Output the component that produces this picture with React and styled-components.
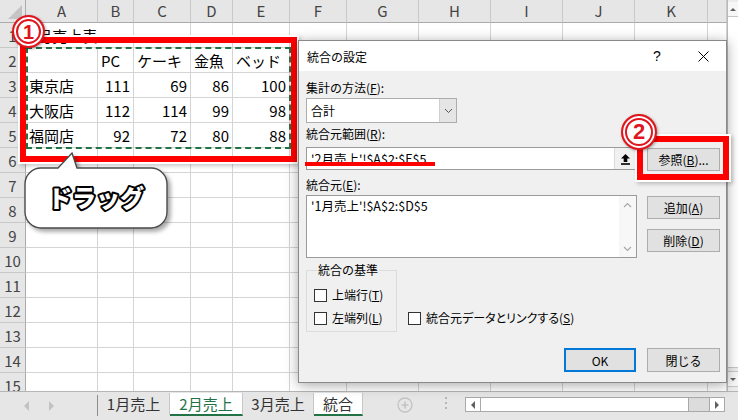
import React from 'react';
import styled, { createGlobalStyle } from 'styled-components';

const GlobalStyle = createGlobalStyle`
  html, body {
    margin: 0;
    padding: 0;
  }
  body {
    font-family: "Noto Sans CJK JP", "Noto Sans", sans-serif;
    background: #fff;
    overflow: hidden;
  }
`;

const COLS = [72, 36, 57, 42, 57, 57, 72, 72, 72, 72, 73, 19];
const LETTERS = ['A', 'B', 'C', 'D', 'E', 'F', 'G', 'H', 'I', 'J', 'K', ''];
const DATA = [
  [{ text: '2月売上表', span: 2 }],
  ['', 'PC', 'ケーキ', '金魚', 'ベッド'],
  ['東京店', 111, 69, 86, 100],
  ['大阪店', 112, 114, 99, 98],
  ['福岡店', 92, 72, 80, 88],
];

const Screen = styled.div`
  position: relative;
  width: 738px;
  height: 420px;
  overflow: hidden;
  display: flex;
  flex-direction: column;
  background: #fff;
`;

/* ---------- sheet ---------- */

const SheetArea = styled.div`
  display: flex;
  height: 391px;
  flex: none;
  overflow: hidden;
`;

const Grid = styled.div`
  display: grid;
  grid-template-columns: 26px ${COLS.map((w) => `${w}px`).join(' ')};
  grid-template-rows: 23px;
  grid-auto-rows: 25px;
  width: 727px;
  flex: none;
`;

const Cell = styled.div`
  box-sizing: border-box;
  border-right: 1px solid #d4d4d4;
  border-bottom: 1px solid #d4d4d4;
  padding: 0 3px 0 3px;
  font-size: 15px;
  line-height: 25px;
  color: #000;
  white-space: nowrap;
  overflow: hidden;
  text-align: ${({ $num }) => ($num ? 'right' : 'left')};
  grid-column: ${({ $span }) => ($span ? `span ${$span}` : 'auto')};
`;

const ColHead = styled.div`
  box-sizing: border-box;
  background: #e6e6e6;
  border-right: 1px solid #c8c8c8;
  border-bottom: 1px solid #ababab;
  font-size: 15px;
  line-height: 22px;
  text-align: center;
  color: #444;
`;

const Corner = styled(ColHead)`
  border-right-color: #ababab;
  display: flex;
  align-items: flex-end;
  justify-content: flex-end;
  padding: 0 3px 3px 0;
`;

const RowHead = styled.div`
  box-sizing: border-box;
  background: #e6e6e6;
  border-right: 1px solid #ababab;
  border-bottom: 1px solid #c8c8c8;
  font-size: 15px;
  line-height: 25px;
  text-align: center;
  color: #444;
`;

const VScroll = styled.div`
  width: 11px;
  flex: none;
  box-sizing: border-box;
  border-left: 1px solid #b9b9b9;
  background: #ececec;
  display: flex;
  flex-direction: column;
`;

const VArrow = styled.div`
  height: 14px;
  flex: none;
  display: flex;
  align-items: center;
  justify-content: center;
  background: #f7f7f7;
  border-bottom: 1px solid #c6c6c6;
  margin-top: ${({ $down }) => ($down ? 'auto' : '2px')};
  margin-bottom: ${({ $down }) => ($down ? '4px' : '0')};
  border-top: ${({ $down }) => ($down ? '1px solid #c6c6c6' : 'none')};
`;

const VThumb = styled.div`
  height: 350px;
  background: #fff;
  border-bottom: 1px solid #c6c6c6;
`;

/* ---------- tab bar ---------- */

const TabBar = styled.div`
  height: 29px;
  flex: none;
  box-sizing: border-box;
  border-top: 1px solid #b5b5b5;
  background: #e6e6e6;
  display: flex;
  align-items: flex-start;
`;

const NavArea = styled.div`
  width: 98px;
  height: 21px;
  margin-top: 3px;
  box-sizing: border-box;
  border-right: 1px solid #8c8c8c;
  display: flex;
  align-items: center;
  gap: 20px;
  padding-left: 24px;
  flex: none;
`;

const Tab = styled.div`
  width: ${({ $w }) => $w}px;
  height: 23px;
  margin-top: 1px;
  flex: none;
  box-sizing: border-box;
  font-size: 15px;
  line-height: 21px;
  text-align: center;
  color: ${({ $active }) => ($active ? '#217346' : '#333')};
  background: ${({ $active, $grouped }) => ($active || $grouped ? '#fff' : 'transparent')};
  border-right: 1px solid #c6c6c6;
  border-bottom: ${({ $active, $grouped }) =>
    $active || $grouped ? '2px solid #217346' : '2px solid transparent'};
`;

const AddSheet = styled.div`
  margin: 5px 0 0 34px;
  flex: none;
  display: flex;
`;

const Dots = styled.div`
  margin: 4px 0 0 31px;
  flex: none;
  display: flex;
`;

const HScroll = styled.div`
  margin: 5px 13px 0 auto;
  width: 260px;
  height: 15px;
  box-sizing: border-box;
  border: 1px solid #a9a9a9;
  display: flex;
  flex: none;
`;

const HArrow = styled.div`
  width: 14px;
  flex: none;
  background: #fff;
  display: flex;
  align-items: center;
  justify-content: center;
  border-left: ${({ $right }) => ($right ? '1px solid #a9a9a9' : 'none')};
  border-right: ${({ $right }) => ($right ? 'none' : '1px solid #a9a9a9')};
`;

const HThumb = styled.div`
  width: 207px;
  flex: none;
  background: #fff;
  border-right: 1px solid #a9a9a9;
`;

const HTrack = styled.div`
  flex: 1;
  background: #dcdcdc;
`;

/* ---------- annotations ---------- */

const RedFrame = styled.div`
  position: absolute;
  left: ${({ $x }) => $x}px;
  top: ${({ $y }) => $y}px;
  width: ${({ $w }) => $w}px;
  height: ${({ $h }) => $h}px;
  box-sizing: border-box;
  border: 6px solid #ff0000;
  box-shadow: 0 0 0 2px #fff, 2px 2px 4px 2px rgba(0, 0, 0, 0.22);
`;

const Marquee = styled.div`
  position: absolute;
  left: 26px;
  top: 47px;
  width: 265px;
  height: 102px;
  box-sizing: border-box;
  border: 2px dashed #217346;
`;

const Badge = styled.div`
  position: absolute;
  left: ${({ $x }) => $x}px;
  top: ${({ $y }) => $y}px;
  width: ${({ $size }) => $size}px;
  height: ${({ $size }) => $size}px;
  box-sizing: border-box;
  border-radius: 50%;
  background: #fff;
  border: 2px solid #e0161e;
  box-shadow: inset 0 0 0 2px #fff, inset 0 0 0 4px #e0161e, 1px 1px 3px rgba(0, 0, 0, 0.35);
  display: flex;
  align-items: center;
  justify-content: center;
  font-family: "Liberation Sans", Arial, sans-serif;
  font-weight: 700;
  font-size: ${({ $size }) => Math.round($size * 0.62)}px;
  line-height: 1;
  color: #e0161e;
  text-shadow: 0 0 1px #fff;
`;

const Underline = styled.div`
  position: absolute;
  left: 305px;
  top: 162px;
  width: 130px;
  height: 4px;
  background: #ff0000;
`;

const Balloon = styled.svg`
  position: absolute;
  left: 22px;
  top: 150px;
  overflow: visible;
`;

/* ---------- dialog ---------- */

const Dialog = styled.div`
  position: absolute;
  left: 298px;
  top: 40px;
  width: 429px;
  height: 343px;
  box-sizing: border-box;
  border: 1px solid #8a8a8a;
  background: #f0f0f0;
  box-shadow: 0 2px 12px rgba(0, 0, 0, 0.35);
  display: flex;
  flex-direction: column;
  font-size: 12px;
  color: #000;
`;

const TitleBar = styled.div`
  height: 30px;
  flex: none;
  background: #fff;
  display: flex;
  align-items: center;
  padding-left: 8px;
  font-size: 12px;
`;

const TitleText = styled.div`
  flex: 1;
`;

const TitleButton = styled.div`
  width: 46px;
  height: 30px;
  display: flex;
  align-items: center;
  justify-content: center;
  font-family: "Liberation Sans", Arial, sans-serif;
  font-size: 14px;
`;

const Body = styled.div`
  flex: 1;
  display: flex;
  flex-direction: column;
  padding: 0 6px 0 7px;
`;

const Label = styled.div`
  line-height: 16px;
  height: 16px;
  margin-top: ${({ $mt }) => $mt}px;
  white-space: nowrap;
`;

const Row = styled.div`
  display: flex;
  gap: ${({ $gap }) => ($gap ?? 10)}px;
  margin-top: ${({ $mt }) => $mt}px;
  align-items: flex-start;
`;

const Select = styled.div`
  width: 151px;
  height: 25px;
  box-sizing: border-box;
  border: 1px solid #adadad;
  background: #fff;
  display: flex;
  margin-top: 2px;
`;

const SelectValue = styled.div`
  flex: 1;
  padding-left: 4px;
  line-height: 23px;
`;

const SelectButton = styled.div`
  width: 16px;
  background: #e5e5e5;
  border-left: 1px solid #d0d0d0;
  display: flex;
  align-items: center;
  justify-content: center;
`;

const Field = styled.div`
  width: 331px;
  height: 23px;
  box-sizing: border-box;
  border: 1px solid #9a9a9a;
  background: #fff;
  display: flex;
  flex: none;
`;

const FieldText = styled.div`
  flex: 1;
  padding-left: 4px;
  line-height: 21px;
  font-size: 12.5px;
  white-space: nowrap;
`;

const CollapseButton = styled.div`
  width: 21px;
  background: #f0f0f0;
  border-left: 1px solid #d9d9d9;
  display: flex;
  align-items: center;
  justify-content: center;
`;

const ListBox = styled.div`
  width: 331px;
  height: 63px;
  box-sizing: border-box;
  border: 1px solid #9a9a9a;
  background: #fff;
  display: flex;
  flex: none;
`;

const ListText = styled.div`
  flex: 1;
  padding: 2px 0 0 4px;
  line-height: 16px;
  font-size: 12.5px;
`;

const ListScroll = styled.div`
  width: 17px;
  background: #f7f7f7;
  display: flex;
  flex-direction: column;
  justify-content: space-between;
  align-items: center;
  padding: 6px 0 5px;
`;

const ButtonStack = styled.div`
  display: flex;
  flex-direction: column;
  gap: 10px;
  margin-top: 1px;
`;

const Button = styled.div`
  width: ${({ $w }) => $w || 73}px;
  height: ${({ $h }) => $h || 23}px;
  box-sizing: border-box;
  border: ${({ $default }) => ($default ? '2px solid #0078d7' : '1px solid #adadad')};
  background: #e1e1e1;
  display: flex;
  align-items: center;
  justify-content: center;
  flex: none;
  margin-top: ${({ $mt }) => $mt || 0}px;
  white-space: nowrap;
`;

const Group = styled.fieldset`
  margin: 4px 0 0 0;
  padding: 9px 0 5px 7px;
  width: 91px;
  box-sizing: border-box;
  border: 1px solid #dcdcdc;
  display: flex;
  flex-direction: column;
  gap: 7px;
  min-inline-size: 0;
`;

const Legend = styled.legend`
  padding: 0 1px;
  margin-left: 3px;
  line-height: 16px;
  font-size: 12px;
`;

const Check = styled.div`
  display: flex;
  align-items: center;
  gap: 5px;
  line-height: 16px;
  white-space: nowrap;
  font-feature-settings: "palt";
  align-self: ${({ $bottom }) => ($bottom ? 'flex-end' : 'auto')};
  margin: ${({ $bottom }) => ($bottom ? '0 0 6px 11px' : '0')};
`;

const Box = styled.span`
  width: 13px;
  height: 13px;
  box-sizing: border-box;
  border: 1px solid #333;
  background: #fff;
  flex: none;
`;

const Footer = styled.div`
  display: flex;
  justify-content: flex-end;
  gap: 11px;
  margin-top: 16px;
`;

function Key({ children }) {
  return <u>{children}</u>;
}

function Chevron({ up }) {
  return (
    <svg width="9" height="6" viewBox="0 0 9 6">
      <polyline
        points={up ? '1,5 4.5,1.5 8,5' : '1,1 4.5,4.5 8,1'}
        fill="none"
        stroke="#a6a6a6"
        strokeWidth="1.1"
      />
    </svg>
  );
}

function Tri({ dir, color = '#c2c2c2', size = 5 }) {
  const pts =
    dir === 'left'
      ? `${size},0 ${size},${size * 2} 0,${size}`
      : dir === 'right'
      ? `0,0 0,${size * 2} ${size},${size}`
      : dir === 'up'
      ? `0,${size} ${size * 2},${size} ${size},0`
      : `0,0 ${size * 2},0 ${size},${size}`;
  const w = dir === 'left' || dir === 'right' ? size : size * 2;
  const h = dir === 'left' || dir === 'right' ? size * 2 : size;
  return (
    <svg width={w} height={h} viewBox={`0 0 ${w} ${h}`}>
      <polygon points={pts} fill={color} />
    </svg>
  );
}

function Sheet() {
  return (
    <SheetArea>
      <Grid>
        <Corner>
          <svg width="15" height="14" viewBox="0 0 15 14">
            <polygon points="15,0 15,14 1,14" fill="#c4c4c4" />
          </svg>
        </Corner>
        {LETTERS.map((l, i) => (
          <ColHead key={i}>{l}</ColHead>
        ))}
        {Array.from({ length: 15 }).map((_, r) => {
          const row = DATA[r] || [];
          const cells = [];
          let c = 0;
          while (c < COLS.length) {
            const v = row[c];
            if (v && typeof v === 'object') {
              cells.push(
                <Cell key={c} $span={v.span}>
                  {v.text}
                </Cell>
              );
              c += v.span;
            } else {
              cells.push(
                <Cell key={c} $num={typeof v === 'number'}>
                  {v ?? ''}
                </Cell>
              );
              c += 1;
            }
          }
          return (
            <React.Fragment key={r}>
              <RowHead>{r + 1}</RowHead>
              {cells}
            </React.Fragment>
          );
        })}
      </Grid>
      <VScroll>
        <VArrow>
          <Tri dir="up" color="#606060" size={3} />
        </VArrow>
        <VThumb />
        <VArrow $down>
          <Tri dir="down" color="#606060" size={3} />
        </VArrow>
      </VScroll>
    </SheetArea>
  );
}

function SheetTabs() {
  return (
    <TabBar>
      <NavArea>
        <Tri dir="left" />
        <Tri dir="right" />
      </NavArea>
      <Tab $w={72}>1月売上</Tab>
      <Tab $w={73} $active>
        2月売上
      </Tab>
      <Tab $w={71}>3月売上</Tab>
      <Tab $w={49} $grouped>
        統合
      </Tab>
      <AddSheet>
        <svg width="16" height="16" viewBox="0 0 16 16">
          <circle cx="8" cy="8" r="7" fill="none" stroke="#c3c3c3" strokeWidth="1.3" />
          <path d="M8 4.5v7M4.5 8h7" stroke="#c3c3c3" strokeWidth="1.6" />
        </svg>
      </AddSheet>
      <Dots>
        <svg width="4" height="14" viewBox="0 0 4 14">
          <rect x="1" y="1" width="2" height="2" fill="#b5b5b5" />
          <rect x="1" y="6" width="2" height="2" fill="#b5b5b5" />
          <rect x="1" y="11" width="2" height="2" fill="#b5b5b5" />
        </svg>
      </Dots>
      <HScroll>
        <HArrow>
          <Tri dir="left" color="#606060" size={4} />
        </HArrow>
        <HThumb />
        <HTrack />
        <HArrow $right>
          <Tri dir="right" color="#606060" size={4} />
        </HArrow>
      </HScroll>
    </TabBar>
  );
}

function ConsolidateDialog() {
  return (
    <Dialog>
      <TitleBar>
        <TitleText>統合の設定</TitleText>
        <TitleButton>?</TitleButton>
        <TitleButton>
          <svg width="11" height="11" viewBox="0 0 11 11">
            <path d="M0.5 0.5l10 10M10.5 0.5l-10 10" stroke="#000" strokeWidth="1" />
          </svg>
        </TitleButton>
      </TitleBar>
      <Body>
        <Label $mt={9}>
          集計の方法(<Key>F</Key>):
        </Label>
        <Select>
          <SelectValue>合計</SelectValue>
          <SelectButton>
            <svg width="9" height="6" viewBox="0 0 9 6">
              <polyline points="1,1 4.5,4.5 8,1" fill="none" stroke="#555" strokeWidth="1" />
            </svg>
          </SelectButton>
        </Select>
        <Label $mt={3}>
          統合元範囲(<Key>R</Key>):
        </Label>
        <Row $mt={5}>
          <Field>
            <FieldText>'2月売上'!$A$2:$E$5</FieldText>
            <CollapseButton>
              <svg width="11" height="12" viewBox="0 0 11 12">
                <path d="M5.5 1L10 5.5H7.3V9H3.7V5.5H1Z" fill="#000" />
                <rect x="1" y="10.2" width="9" height="1.6" fill="#000" />
              </svg>
            </CollapseButton>
          </Field>
          <Button $mt={1}>
            参照(<Key>B</Key>)...
          </Button>
        </Row>
        <Label $mt={6}>
          統合元(<Key>E</Key>):
        </Label>
        <Row $mt={2}>
          <ListBox>
            <ListText>'1月売上'!$A$2:$D$5</ListText>
            <ListScroll>
              <Chevron up />
              <Chevron />
            </ListScroll>
          </ListBox>
          <ButtonStack>
            <Button>
              追加(<Key>A</Key>)
            </Button>
            <Button>
              削除(<Key>D</Key>)
            </Button>
          </ButtonStack>
        </Row>
        <Row $mt={0} $gap={0}>
          <Group>
            <Legend>統合の基準</Legend>
            <Check>
              <Box />
              <span>
                上端行(<Key>T</Key>)
              </span>
            </Check>
            <Check>
              <Box />
              <span>
                左端列(<Key>L</Key>)
              </span>
            </Check>
          </Group>
          <Check $bottom>
            <Box />
            <span>
              統合元データとリンクする(<Key>S</Key>)
            </span>
          </Check>
        </Row>
        <Footer>
          <Button $w={72} $h={24} $default>
            OK
          </Button>
          <Button $h={24}>閉じる</Button>
        </Footer>
      </Body>
    </Dialog>
  );
}

function DragBalloon() {
  return (
    <Balloon width="152" height="84" viewBox="0 0 152 84">
      <defs>
        <filter id="balloonShadow" x="-10%" y="-10%" width="130%" height="140%">
          <feDropShadow dx="3" dy="3" stdDeviation="2" floodColor="#000" floodOpacity="0.35" />
        </filter>
      </defs>
      <path
        d="M19 18 H36 L50 3 L55 18 H129 A16 16 0 0 1 145 34 V62 A16 16 0 0 1 129 78 H19 A16 16 0 0 1 3 62 V34 A16 16 0 0 1 19 18 Z"
        fill="#fff"
        stroke="#4a4a4a"
        strokeWidth="1.4"
        filter="url(#balloonShadow)"
      />
      <text
        x="74"
        y="57"
        textAnchor="middle"
        fontFamily='"Noto Sans CJK JP", sans-serif'
        fontWeight="900"
        fontSize="24"
        fill="#fff"
        stroke="#000"
        strokeWidth="4"
        strokeLinejoin="round"
        paintOrder="stroke"
      >
        ドラッグ
      </text>
    </Balloon>
  );
}

export default function App() {
  return (
    <>
      <GlobalStyle />
      <Screen>
        <Sheet />
        <SheetTabs />
        <Marquee />
        <RedFrame $x={20} $y={37} $w={277} $h={125} />
        <Badge $x={12} $y={15} $size={33}>
          1
        </Badge>
        <DragBalloon />
        <ConsolidateDialog />
        <Underline />
        <RedFrame $x={637} $y={136} $w={92} $h={44} />
        <Badge $x={621} $y={114} $size={36}>
          2
        </Badge>
      </Screen>
    </>
  );
}
